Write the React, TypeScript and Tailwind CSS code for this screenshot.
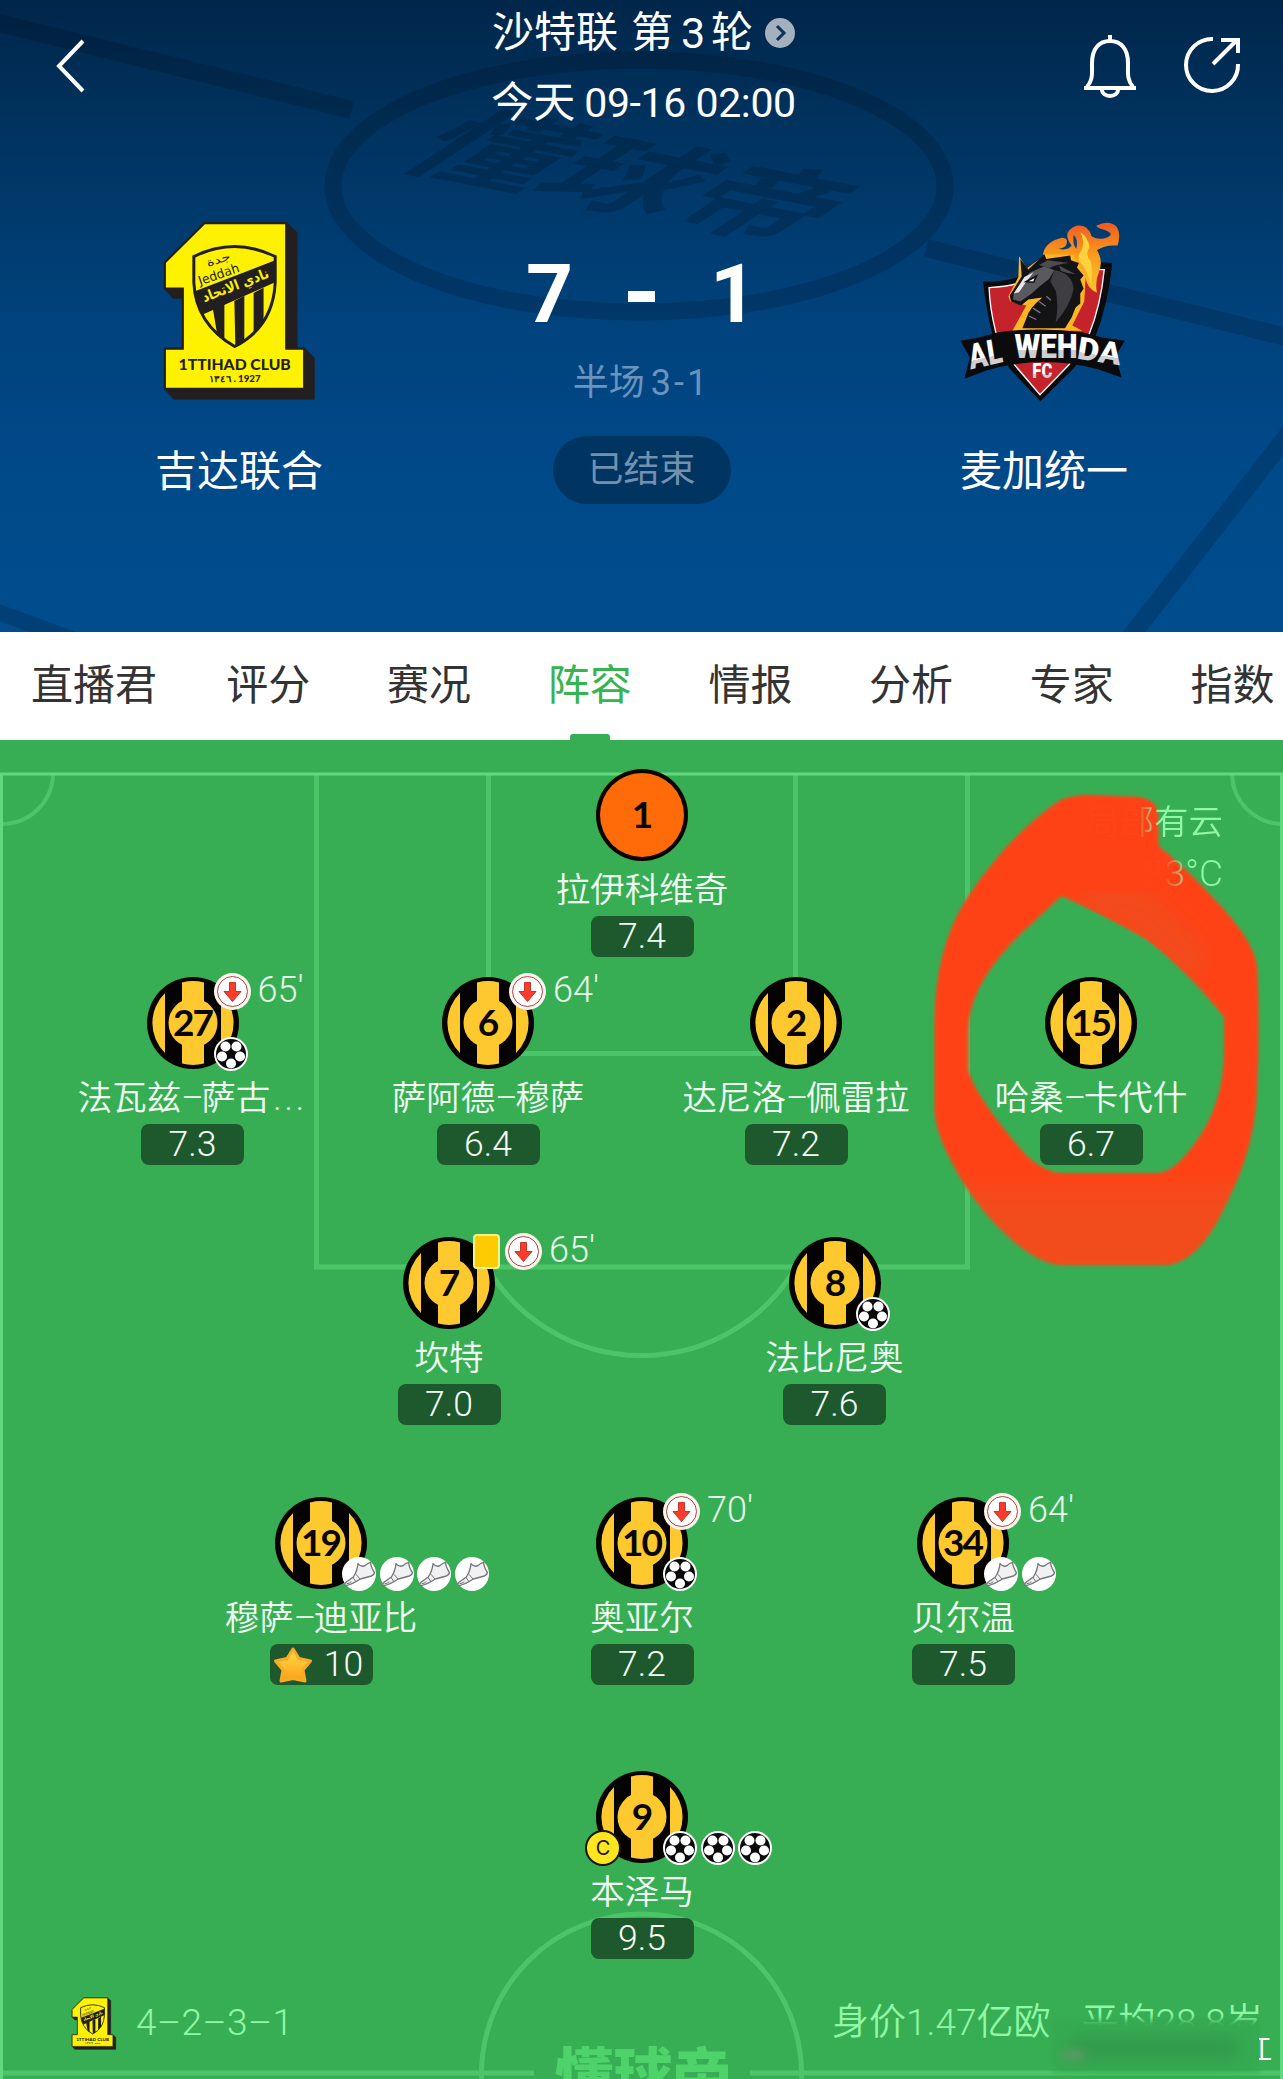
import { Fragment } from 'react'

type EventType = 'goal' | 'assist'

interface Player {
  number: number
  name: string
  rating: string
  x: number
  y: number
  subbedAt?: string
  yellow?: boolean
  captain?: boolean
  best?: boolean
  keeper?: boolean
  events?: EventType[]
}

const TABS = ['直播君', '评分', '赛况', '阵容', '情报', '分析', '专家', '指数']

const PLAYERS: Player[] = [
  { number: 1, name: '拉伊科维奇', rating: '7.4', x: 642, y: 75, keeper: true },
  { number: 27, name: '法瓦兹–萨古...', rating: '7.3', x: 192.5, y: 283, subbedAt: "65'", events: ['goal'] },
  { number: 6, name: '萨阿德–穆萨', rating: '6.4', x: 488, y: 283, subbedAt: "64'" },
  { number: 2, name: '达尼洛–佩雷拉', rating: '7.2', x: 796, y: 283 },
  { number: 15, name: '哈桑–卡代什', rating: '6.7', x: 1091, y: 283 },
  { number: 7, name: '坎特', rating: '7.0', x: 449, y: 543, subbedAt: "65'", yellow: true },
  { number: 8, name: '法比尼奥', rating: '7.6', x: 834.5, y: 543, events: ['goal'] },
  { number: 19, name: '穆萨–迪亚比', rating: '10', x: 321, y: 803, best: true, events: ['assist', 'assist', 'assist', 'assist'] },
  { number: 10, name: '奥亚尔', rating: '7.2', x: 642, y: 803, subbedAt: "70'", events: ['goal'] },
  { number: 34, name: '贝尔温', rating: '7.5', x: 963, y: 803, subbedAt: "64'", events: ['assist', 'assist'] },
  { number: 9, name: '本泽马', rating: '9.5', x: 642, y: 1077, captain: true, events: ['goal', 'goal', 'goal'] },
]

function IttihadLogo({ className }: { className: string }) {
  return (
    <svg viewBox="70 62 465 545" className={className}>
      <path d="M197 72H443L474 100V450H497L526 478V600H106L78 570V450H132V296H104L78 268V190Z" fill="#231f20" stroke="#231f20" strokeWidth="6" />
      <path d="M197 72H443V450H497V570H78V450H132V268H78V190Z" fill="#fff200" stroke="#231f20" strokeWidth="6" />
      <path d="M165 172Q288 112 410 172V250Q404 384 288 443Q170 374 165 250Z" fill="#fff200" stroke="#231f20" strokeWidth="9" />
      <path d="M170 276L408 184V250L194 346Q176 318 170 276Z" fill="#231f20" />
      <path d="M222 328L257 312V428L236 410ZM287 306L317 290V426L290 441ZM345 282L375 266V366L345 402Z" fill="#231f20" />
      <g fontFamily="'DejaVu Sans', sans-serif" fontWeight="bold" textAnchor="middle">
        <text transform="translate(295 272) rotate(-21)" fontSize="42" textLength="212" lengthAdjust="spacingAndGlyphs" fill="#fff200">نادي الاتحاد</text>
        <text transform="translate(242 192) rotate(-17)" fontSize="34" fontWeight="normal" textLength="74" lengthAdjust="spacingAndGlyphs" fill="#231f20">جدة</text>
        <text transform="translate(244 238) rotate(-19)" fontSize="38" fontWeight="normal" textLength="128" lengthAdjust="spacingAndGlyphs" fill="#231f20">Jeddah</text>
      </g>
      <g fontFamily="Lato, sans-serif" fontWeight="900" fill="#231f20" textAnchor="middle">
        <text x="288" y="514" fontSize="44" textLength="338" lengthAdjust="spacingAndGlyphs">1TTIHAD CLUB</text>
        <text x="288" y="550" fontSize="26" textLength="156" lengthAdjust="spacingAndGlyphs">١٣٤٦ . 1927</text>
      </g>
    </svg>
  )
}

function WehdaLogo({ className }: { className: string }) {
  return (
    <svg viewBox="60 55 510 550" className={className}>
      <defs>
        <linearGradient id="flame" x1="0" y1="0" x2="0" y2="1">
          <stop offset="0" stopColor="#ee5a24" />
          <stop offset="0.45" stopColor="#f99a1c" />
          <stop offset="1" stopColor="#fdc52c" />
        </linearGradient>
        <linearGradient id="lettering" x1="0" y1="0" x2="0" y2="1">
          <stop offset="0.6" stopColor="#ffffff" />
          <stop offset="0.6" stopColor="#cfcfd2" />
        </linearGradient>
      </defs>
      <path d="M132 240Q190 242 240 226L300 170L520 184Q510 300 468 410L405 500L304 600L210 500L160 400Q140 320 132 240Z" fill="#0b0b0d" />
      <path d="M150 258Q200 256 240 244L300 200L496 204Q486 310 450 400L390 490L303 580L226 490L170 392Q152 320 150 258Z" fill="#c4232b" stroke="#fff" strokeWidth="4" />
      <path d="M312 158Q318 120 368 108Q390 108 382 130Q374 142 356 140Q384 150 398 132Q366 90 412 72Q448 66 458 104Q480 118 508 106Q528 96 496 84Q476 80 472 72Q510 54 532 74Q548 96 536 132Q500 128 474 146Q494 176 480 212Q468 240 474 274Q446 262 440 230L400 180L330 176Z" fill="url(#flame)" />
      <path d="M424 92Q440 120 426 150Q410 168 430 190Q446 208 456 250Q462 210 456 180Q436 160 452 136Q446 104 424 92Z" fill="#fdd23e" />
      <path d="M404 100Q420 112 412 142Q400 128 404 100Z" fill="#17407a" />
      <path d="M240 164L264 200L320 158L404 160L440 230L436 300L400 372L430 388H220L262 312L214 300L208 284L238 226Z" fill="#fcb623" />
      <path d="M244 172L268 204L316 158L322 172L394 162L396 176L420 184L414 198L434 222L424 234L434 262L424 276L424 306L410 318L398 348L378 380H250L262 350Q270 320 310 288L268 294L246 312L216 300L212 282L248 224Z" fill="#141416" />
      <path d="M270 214L316 194L346 206L330 232L302 254L278 276L244 300L222 294L224 276L252 246Z" fill="#5a5a5e" />
      <path d="M256 226L284 212L262 240L240 272L224 276Z" fill="#e8e8ea" />
      <path d="M262 240L292 224L284 242Z" fill="#fff" stroke="#111" strokeWidth="5" />
      <path d="M346 206Q400 214 404 262Q394 314 350 362Q360 310 350 268L334 240Z" fill="#3e3e42" />
      <path d="M326 176L392 184Q350 188 330 200L300 190ZM360 192L410 218Q386 216 366 208Z" fill="#4b4b50" />
      <path d="M300 300L320 314M282 320L304 334M270 344L292 354M322 284L336 296" stroke="#77777b" strokeWidth="4" />
      <path d="M64 418L120 408L176 392Q304 376 430 392L490 408L558 418L530 464L548 528L480 504Q304 458 140 508L76 532L92 468Z" fill="#0b0b0d" />
      <g fontFamily="Roboto, sans-serif" fontWeight="900" fill="url(#lettering)">
        <text transform="translate(94 504) rotate(-13) skewX(-4)" fontSize="104" textLength="102" lengthAdjust="spacingAndGlyphs">AL</text>
        <text transform="translate(226 470)" fontSize="102" textLength="190" lengthAdjust="spacingAndGlyphs">WEH</text>
        <text transform="translate(412 471) rotate(9)" fontSize="94" textLength="132" lengthAdjust="spacingAndGlyphs">DA</text>
        <text x="280" y="530" fontSize="58" textLength="60" lengthAdjust="spacingAndGlyphs">FC</text>
      </g>
    </svg>
  )
}

function HeaderBackdrop() {
  return (
    <svg viewBox="0 0 1283 632" className="absolute inset-0 h-full w-full">
      <g stroke="#000" strokeOpacity="0.15" fill="none">
        <ellipse cx="639" cy="186" rx="306" ry="126" strokeWidth="17" />
        <path d="M-5 22L352 110" strokeWidth="18" />
        <path d="M926 248L1290 338" strokeWidth="18" />
        <path d="M1290 432L1120 650" strokeWidth="18" />
        <path d="M-10 609L80 642" strokeWidth="16" />
      </g>
      <text transform="matrix(1.34 0.26 -1.06 0.7 392 164)" fontSize="100" fontWeight="700" fill="#000" fillOpacity="0.17" fontFamily="'Noto Sans CJK SC', sans-serif">
        懂球帝
      </text>
    </svg>
  )
}

function MatchHeader() {
  return (
    <header className="relative h-[632px] bg-[linear-gradient(180deg,#00264a_0%,#00335f_20%,#00427c_50%,#004a8a_76%,#004c8c_100%)] font-normal text-white">
      <HeaderBackdrop />
      <div className="relative flex h-[200px] items-start justify-between pl-[54px] pr-[40px]">
        <svg width="150" height="60" viewBox="54 36 150 60" className="mt-9 overflow-visible" fill="none" stroke="#fff" strokeWidth="4">
          <path d="M83 41L59 66L83 91" />
        </svg>
        <div className="flex w-[400px] flex-col items-center">
          <div className="mt-[3px] flex h-[60px] items-center whitespace-nowrap text-[42px] leading-[60px]">
            <span>沙特联</span>
            <span className="ml-[13px]">第</span>
            <span className="ml-[8px] w-[30px] text-[43px]">3</span>
            <span>轮</span>
            <svg width="30" height="30" viewBox="0 0 30 30" className="ml-[12px]">
              <circle cx="15" cy="15" r="15" fill="#a3b1bf" />
              <path d="M12 8L19 15L12 22" fill="none" stroke="#0b3259" strokeWidth="3" />
            </svg>
          </div>
          <div className="mt-[10px] flex h-[60px] items-center whitespace-nowrap text-[42px] leading-[60px]">
            <span>今天</span>
            <span className="ml-[9px] text-[41px] tracking-[-0.4px]">09-16 02:00</span>
          </div>
        </div>
        <svg width="160" height="70" viewBox="1083 33 160 70" className="mt-[33px]" fill="none" stroke="#fff" strokeWidth="4">
          <path d="M1084 88H1136M1087 87C1093 80 1092 74 1092 63C1092 49 1099 41 1110 41S1128 49 1128 63C1128 74 1127 80 1133 87M1110 35V41M1102 90A8 6 0 0 0 1118 90" />
          <path d="M1213 39A26 26 0 1 0 1238 64M1213 64L1237 40M1221 40H1238V53" />
        </svg>
      </div>
      <div className="relative flex pt-[20px]">
        <div className="flex w-[478px] flex-col items-center">
          <IttihadLogo className="h-[181px] w-[155px]" />
          <div className="mt-[41px] text-[42px] leading-[60px]">吉达联合</div>
        </div>
        <div className="flex w-[327px] flex-col items-center">
          <div className="mt-[32px] flex h-[84px] items-center justify-center text-[82px] font-bold leading-none">
            <span>7</span>
            <span className="mx-[55px] mt-[4px] h-[11px] w-[27px] bg-white" />
            <span>1</span>
          </div>
          <div className="mt-[25px] whitespace-nowrap text-[36px] leading-[44px] text-[#6a93bd]">
            半场<span className="ml-[6px] tracking-[3px]">3-1</span>
          </div>
          <div className="mt-[31px] flex h-[68px] w-[178px] items-center justify-center rounded-full bg-[#003562] text-[36px] leading-[70px] text-[#7391ae]">
            已结束
          </div>
        </div>
        <div className="flex w-[478px] flex-col items-center">
          <WehdaLogo className="h-[183px] w-[170px]" />
          <div className="mt-[39px] text-[42px] leading-[60px]">麦加统一</div>
        </div>
      </div>
    </header>
  )
}

function TabBar() {
  return (
    <nav className="flex h-[108px] overflow-hidden bg-white text-[42px] font-normal text-[#333]">
      {TABS.map((tab, i) => (
        <div
          key={tab}
          className={`relative flex shrink-0 items-center justify-center whitespace-nowrap leading-[112px] ${i === 0 ? 'w-[188px]' : 'w-[160.7px]'} ${
            tab === '阵容' ? 'text-[#37b44f]' : ''
          }`}
        >
          {tab}
          {tab === '阵容' && <span className="absolute bottom-0 h-[6px] w-[40px] rounded-t-[3px] bg-[#38ae54]" />}
        </div>
      ))}
    </nav>
  )
}

function PitchLines() {
  return (
    <svg viewBox="0 740 1283 1339" className="absolute inset-0 h-full w-full" fill="none" stroke="#4cc568" strokeWidth="5">
      <path d="M316.5 775V1267H967.500V775M488.500 775V1053.500H795.500V775" />
      <path d="M487 1267A179 179 0 0 0 796 1267" />
      <path d="M53 775A51 51 0 0 1 2 824M1232 775A51 51 0 0 0 1281 824" strokeWidth="4" />
      <circle cx="641.5" cy="2074" r="160" />
      <path d="M2 2073H534M750 2073H1281" />
      <path d="M1.5 2079V774H1281.5V2079" stroke="#5fd87e" strokeWidth="3" />
      <text x="643" y="2097" textAnchor="middle" fontSize="59" fontWeight="900" fill="#4ed26a" stroke="none" fontFamily="'Noto Sans CJK SC', sans-serif">
        懂球帝
      </text>
    </svg>
  )
}

function Shirt({ number, keeper }: { number: number; keeper?: boolean }) {
  return (
    <svg width="92" height="92" viewBox="0 0 92 92" className="block">
      <circle cx="46" cy="46" r="46" fill="#050302" />
      {keeper ? (
        <circle cx="46" cy="46" r="42" fill="#ff6b08" />
      ) : (
        <g fill="#fec92e">
          <path d="M18 16V76A42 42 0 0 1 18 16ZM74 16V76A42 42 0 0 0 74 16Z" />
          <path d="M35 5.500A42 42 0 0 1 57 5.500V86.500A42 42 0 0 1 35 86.500Z" />
          <circle cx="46" cy="46" r="24.500" />
        </g>
      )}
      <text x="45.500" y="59" textAnchor="middle" fontSize="37" fontWeight="bold" fill="#090500" fontFamily="Lato, sans-serif" letterSpacing="-2">
        {number}
      </text>
    </svg>
  )
}

function GoalIcon() {
  return (
    <svg width="34" height="34" viewBox="0 0 34 34">
      <circle cx="17" cy="17" r="17" fill="#fff" />
      <circle cx="17" cy="17" r="15" fill="#0a0a0a" />
      <g fill="#fff">
        <circle cx="11.500" cy="9.500" r="5" />
        <circle cx="22.500" cy="9.500" r="5" />
        <circle cx="26" cy="19.500" r="5" />
        <circle cx="17" cy="26.500" r="5" />
        <circle cx="8" cy="19.500" r="5" />
      </g>
    </svg>
  )
}

function AssistIcon() {
  return (
    <svg width="34" height="34" viewBox="0 0 102 102">
      <circle cx="51" cy="51" r="51" fill="#fff" />
      <path d="M48 20Q58 32 70 25Q76 18 86 16Q86 30 97 46Q97 54 88 57L55 66Q30 82 12 86Q4 84 12 76L34 60Q46 42 48 20Z" fill="#f1f1f4" stroke="#77747a" strokeWidth="4" strokeLinejoin="round" />
      <path d="M32 60L42 74M42 52L54 66M14 80Q22 80 28 74" fill="none" stroke="#77747a" strokeWidth="3" />
    </svg>
  )
}

function SubIcon() {
  return (
    <svg width="37" height="37" viewBox="0 0 37 37">
      <circle cx="18.500" cy="18.500" r="18.500" fill="#fbf7f0" />
      <circle cx="18.500" cy="18.500" r="15" fill="#fff" stroke="#b5413c" strokeWidth="1" />
      <path d="M15.500 9.500H21.500V18.500H27L18.500 28.500L10 18.500H15.500Z" fill="#fb3b2b" stroke="#c9352a" strokeWidth="1" strokeLinejoin="round" />
    </svg>
  )
}

function StarIcon() {
  return (
    <svg width="40" height="38" viewBox="0 0 40 38">
      <defs>
        <linearGradient id="star" x1="0" y1="0" x2="0" y2="1">
          <stop offset="0" stopColor="#ffdf45" />
          <stop offset="1" stopColor="#fb9f1c" />
        </linearGradient>
      </defs>
      <path d="M20 3L26 12.500L37.500 15L30 24L32 35L20 32.500L8 35L10 24L2.500 15L14 12.500Z" fill="url(#star)" stroke="#f9ab26" strokeWidth="3" strokeLinejoin="round" />
    </svg>
  )
}

function PlayerName({ name }: { name: string }) {
  return (
    <div className="mt-[6px] flex whitespace-nowrap text-[34.500px] leading-[46px] text-[#f1fff3]">
      {name.split('–').map((part, i) => (
        <Fragment key={i}>
          {i > 0 && <span className="w-[20px] text-center">–</span>}
          <span>{part.replace('...', '')}</span>
          {part.endsWith('...') && <span className="ml-[3px] tracking-[3px]">...</span>}
        </Fragment>
      ))}
    </div>
  )
}

function PlayerPin({ player }: { player: Player }) {
  return (
    <div className="absolute flex w-[240px] -translate-x-1/2 flex-col items-center" style={{ left: player.x, top: player.y - 46 }}>
      <div className="relative">
        <Shirt number={player.number} keeper={player.keeper} />
        {(player.yellow || player.subbedAt) && (
          <div className="absolute left-[67px] top-[-4px] flex h-[37px] items-center whitespace-nowrap">
            {player.yellow && <span className="ml-[3px] mr-[5px] h-[35px] w-[27px] rounded-[4px] border-2 border-[#f4f48c] bg-[#fdcb02]" />}
            <SubIcon />
            <span className="-mt-[2px] ml-[7px] text-[36px] leading-[37px] text-[#e6fbe9]">{player.subbedAt}</span>
          </div>
        )}
        {player.captain && (
          <span className="absolute left-[-11px] top-[59px] flex size-[36px] items-center justify-center rounded-full border-2 border-[#1a1600] bg-[#ffe620] font-[Inter] text-[20px] font-normal text-[#1a1600]">
            C
          </span>
        )}
        {player.events && (
          <div className="absolute left-[67px] top-[60px] flex gap-[3.700px]">
            {player.events.map((event, i) => (
              <Fragment key={i}>{event === 'goal' ? <GoalIcon /> : <AssistIcon />}</Fragment>
            ))}
          </div>
        )}
      </div>
      <PlayerName name={player.name} />
      <div className="mt-[3px] flex h-[41px] w-[103px] items-center justify-center rounded-[8px] bg-[#1e592d] text-[35.500px] leading-[43px] text-[#f5fff6]">
        {player.best && (
          <span className="-ml-[6px] mr-[11px]">
            <StarIcon />
          </span>
        )}
        {player.rating}
      </div>
    </div>
  )
}

function MarkerRing() {
  return (
    <svg width="383" height="530" viewBox="0 0 1149 1568" preserveAspectRatio="none" className="absolute left-[900px] top-[20px]">
      <defs>
        <linearGradient id="marker" x1="0" y1="0" x2="0" y2="1">
          <stop offset="0.8" stopColor="#fe4216" />
          <stop offset="0.88" stopColor="#f24c1f" />
        </linearGradient>
        <filter id="soft">
          <feGaussianBlur stdDeviation="4" />
        </filter>
        <filter id="shade">
          <feGaussianBlur stdDeviation="28" />
        </filter>
        <clipPath id="ring">
          <path clipRule="evenodd" d="M470 125Q500 105 560 103L700 108Q772 112 774 160L776 255Q850 310 970 440Q1070 550 1072 620Q1080 800 1070 1000Q1060 1150 990 1290Q900 1495 790 1495H490Q420 1495 330 1415Q220 1320 150 1180Q103 1090 103 1030V780Q103 560 200 410Q320 230 470 125ZM484 402Q600 450 740 530Q850 610 972 760V860Q972 1020 880 1140Q820 1222 770 1222H490Q430 1222 370 1160Q230 1000 205 920V800Q205 650 400 480Z" />
        </clipPath>
      </defs>
      <path
        filter="url(#soft)"
        fill="url(#marker)"
        fillRule="evenodd"
        d="M470 125Q500 105 560 103L700 108Q772 112 774 160L776 255Q850 310 970 440Q1070 550 1072 620Q1080 800 1070 1000Q1060 1150 990 1290Q900 1495 790 1495H490Q420 1495 330 1415Q220 1320 150 1180Q103 1090 103 1030V780Q103 560 200 410Q320 230 470 125ZM484 402Q600 450 740 530Q850 610 972 760V860Q972 1020 880 1140Q820 1222 770 1222H490Q430 1222 370 1160Q230 1000 205 920V800Q205 650 400 480Z"
      />
      <g clipPath="url(#ring)">
        <path d="M560 410L720 440L900 620" stroke="#f24c1f" strokeWidth="110" fill="none" filter="url(#shade)" />
      </g>
    </svg>
  )
}

// The two lines fade out where the marker stroke covers them
function Weather() {
  return (
    <div className="absolute right-[60px] top-[57px] flex flex-col items-end text-[34.500px] leading-[51px]">
      <div className="bg-linear-to-r from-[#90f8a6]/2 from-38% to-[#90f8a6] to-55% bg-clip-text text-transparent">局部有云</div>
      <div className="bg-linear-to-r from-[#90f8a6]/2 from-25% to-[#90f8a6] to-60% bg-clip-text text-[37px] text-transparent">33°C</div>
    </div>
  )
}

function PitchFooter() {
  return (
    <div className="absolute inset-x-0 bottom-[28px] flex h-[56px] items-center pl-[71px] text-[#90f8a6]">
      <IttihadLogo className="h-[53px] w-[46px]" />
      <div className="ml-[19px] flex text-[37px] leading-[58px]">
        {['4', '2', '3', '1'].map((line, i) => (
          <Fragment key={line}>
            {i > 0 && <span className="w-[25px] text-center">–</span>}
            <span>{line}</span>
          </Fragment>
        ))}
      </div>
      <div className="absolute left-[832px] flex gap-[31px] whitespace-nowrap text-[37px] leading-[60px]">
        <span>身价1.47亿欧</span>
        <span>平均28.8岁</span>
      </div>
      <div className="absolute left-[1052px] top-[25px] h-[52px] w-[208px] bg-[#36aa52] blur-[3px]" />
      <div className="absolute left-[1068px] top-[40px] h-[26px] w-[170px] rounded-full bg-[#329d4b] blur-[7px]" />
      <div className="absolute left-[1062px] top-[55px] h-[10px] w-[24px] rounded-full bg-[#5c9a64] blur-[4px]" />
      <div className="absolute left-[1259px] top-[38px] flex h-[32px] w-[13px] justify-end overflow-hidden bg-[#38ae54] text-[28px] font-normal leading-[36px] text-white">
        江
      </div>
    </div>
  )
}

function LineupPitch() {
  return (
    <section className="relative h-[1339px] overflow-hidden bg-[#38ae54]">
      <PitchLines />
      <MarkerRing />
      <Weather />
      {PLAYERS.map((player) => (
        <PlayerPin key={player.number} player={player} />
      ))}
      <PitchFooter />
    </section>
  )
}

export default function App() {
  return (
    <div className="w-[1283px] overflow-hidden bg-white font-['Roboto','Noto_Sans_CJK_SC',sans-serif] font-[350]">
      <MatchHeader />
      <TabBar />
      <LineupPitch />
    </div>
  )
}
